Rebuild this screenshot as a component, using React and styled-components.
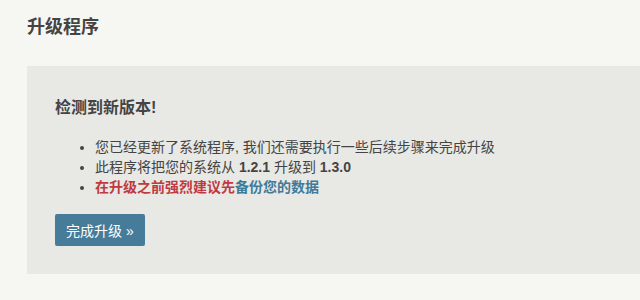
import React from "react";
import styled, { createGlobalStyle } from "styled-components";

const Global = createGlobalStyle`
  html, body { margin: 0; padding: 0; background: #f6f6f2; }
  body { font-family: "Liberation Sans", "Noto Sans CJK SC", sans-serif; color: #444; }
`;

const Page = styled.div`
  padding: 15px 0 0 27px;
`;

const Title = styled.h2`
  margin: 0;
  font-size: 18px;
  line-height: 24px;
  font-weight: bold;
  color: #444;
`;

const Panel = styled.div`
  margin-top: 27px;
  background: #e8e8e4;
  padding: 32px 28px 28px;
`;

const Heading = styled.h3`
  margin: 0;
  font-size: 16px;
  line-height: 20px;
  font-weight: bold;
  color: #444;
`;

const List = styled.ul`
  margin: 19px 0 17px;
  padding-left: 40px;
  font-size: 14px;
  line-height: 20px;
`;

const Item = styled.li``;

const Strong = styled.b`
  font-weight: bold;
`;

const Warn = styled.span`
  font-weight: bold;
  color: ${(p) => (p.$link ? "#3e7b9b" : "#c0393e")};
`;

const Button = styled.button`
  display: inline-flex;
  align-items: center;
  height: 32px;
  padding: 0 11px;
  border: none;
  border-radius: 2px;
  background: #467b99;
  color: #fff;
  font-family: inherit;
  font-size: 14px;
  cursor: pointer;
`;

export default function App() {
  return (
    <>
      <Global />
      <Page>
        <Title>升级程序</Title>
        <Panel>
          <Heading>检测到新版本!</Heading>
          <List>
            <Item>您已经更新了系统程序, 我们还需要执行一些后续步骤来完成升级</Item>
            <Item>
              此程序将把您的系统从 <Strong>1.2.1</Strong> 升级到 <Strong>1.3.0</Strong>
            </Item>
            <Item>
              <Warn>在升级之前强烈建议先</Warn>
              <Warn $link>备份您的数据</Warn>
            </Item>
          </List>
          <Button>完成升级 »</Button>
        </Panel>
      </Page>
    </>
  );
}
